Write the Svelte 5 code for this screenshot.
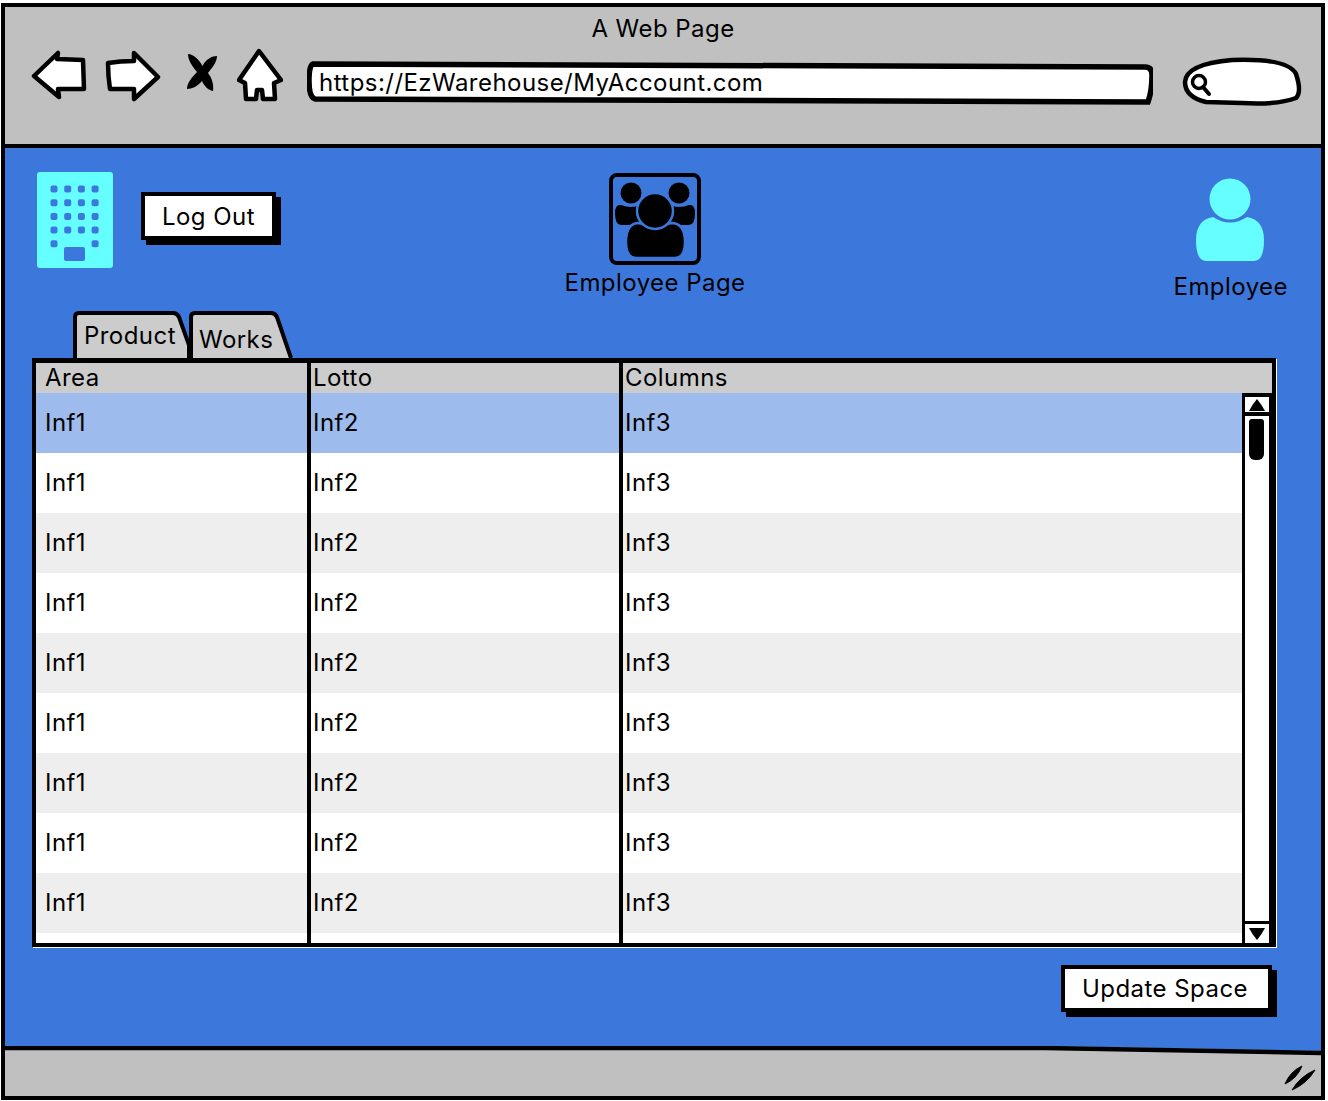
<script>
  const columns = ['Area', 'Lotto', 'Columns'];
  const rows = Array.from({ length: 9 }, () => ['Inf1', 'Inf2', 'Inf3']);
</script>

<div class="window">
  <header class="chrome">
    <div class="title">A Web Page</div>
    <div class="navbar">
      <svg class="nav back" viewBox="0 0 56 50" width="56" height="50">
        <path d="M3 26 L27 3 L26 9 L52 10 L53 39 L27 39 L28 47 Z" fill="#fff" stroke="#000" stroke-width="4.5" stroke-linejoin="round" />
      </svg>
      <svg class="nav forward" viewBox="0 0 56 52" width="56" height="52">
        <path d="M3 13 Q15 11 29 11 L29 3 L53 27 L29 49 L29 39 L5 39 Q3 26 3 13 Z" fill="#fff" stroke="#000" stroke-width="4.5" stroke-linejoin="round" />
      </svg>
      <svg class="nav stop" viewBox="0 0 32 38" width="32" height="38">
        <path d="M2 1 C7 1 13 6 16.5 13 C20 6 26 3 31 3 C31 9 26 15 22 20 C26 25 28 32 27 38 C22 37 18 33 16 28 C12 33 6 36 1 36 C1 30 6 24 11 19 C6 13 2 7 2 1 Z" fill="#000" />
      </svg>
      <svg class="nav home" viewBox="0 0 46 54" width="46" height="54">
        <path d="M22 3 L44 32 L37 35 L38 51 L26 51 L25 42 L20 42 L19 51 L9 51 L8 35 L2 32 Z" fill="#fff" stroke="#000" stroke-width="4.5" stroke-linejoin="round" />
      </svg>
      <div class="url">
        <svg viewBox="0 0 846 46" preserveAspectRatio="none">
          <path d="M6 3 L838 6 Q845 6 845 14 Q845 30 841 41 L8 38 Q2 36 2 20 Q2 4 6 3 Z" fill="#fff" stroke="#000" stroke-width="5.5" />
        </svg>
        <span>https://EzWarehouse/MyAccount.com</span>
      </div>
      <svg class="search" viewBox="0 0 120 50" width="120" height="50">
        <path d="M3 25 Q4 7 50 3 Q106 1 114 17 Q120 35 114 41 Q96 48 60 46 L24 45 Q3 40 3 25 Z" fill="#fff" stroke="#000" stroke-width="4.5" />
        <circle cx="17" cy="25" r="6.5" fill="none" stroke="#000" stroke-width="3.5" />
        <path d="M21 30 L27 37" stroke="#000" stroke-width="4" stroke-linecap="round" />
      </svg>
    </div>
  </header>

  <main class="page">
    <div class="head">
      <div class="head-left">
        <svg class="logo" viewBox="0 0 76 96" width="76" height="96">
          <rect width="76" height="96" rx="3" fill="#66ffff" />
          <g fill="#3c78dc">
            {#each [0, 1, 2, 3] as r}
              {#each [0, 1, 2, 3] as c}
                <rect x={13.5 + c * 13.7} y={13.5 + r * 13.7} width="7" height="7" rx="2" />
              {/each}
            {/each}
            <rect x="13.5" y="68.3" width="7" height="7" rx="2" />
            <rect x="54.6" y="68.3" width="7" height="7" rx="2" />
            <rect x="27" y="75" width="21" height="14" rx="2" />
          </g>
        </svg>
        <button class="btn logout">Log Out</button>
      </div>
      <div class="head-center">
        <svg class="people" viewBox="0 0 92 92" width="92" height="92">
          <rect x="2" y="2" width="88" height="88" rx="6" fill="none" stroke="#000" stroke-width="4" />
          <g fill="#000">
            <circle cx="22" cy="20" r="10.5" />
            <circle cx="70" cy="20" r="10.5" />
            <path d="M6 40 Q6 31 12 32 Q22 36 32 32 L60 32 Q70 36 80 32 Q86 31 86 40 Q86 52 80 52 L12 52 Q6 52 6 40 Z" />
          </g>
          <g fill="#000" stroke="#3c78dc" stroke-width="2.5">
            <path d="M17 69 Q17 50 30 50 Q46 56 62 50 Q76 50 76 69 Q76 85 66 85 L27 85 Q17 85 17 69 Z" />
            <circle cx="46" cy="38" r="18" />
          </g>
        </svg>
        <span class="label">Employee Page</span>
      </div>
      <div class="head-right">
        <svg class="person" viewBox="0 0 68 84" width="68" height="84">
          <circle cx="34" cy="21" r="20.5" fill="#66ffff" />
          <path d="M0 62 Q0 42 17 39 Q34 50 51 39 Q68 42 68 62 Q68 83 58 83 L10 83 Q0 83 0 62 Z" fill="#66ffff" />
        </svg>
        <span class="label right-label">Employee</span>
      </div>
    </div>

    <div class="tabs">
      <div class="tab product">
        <svg viewBox="0 0 118 47" width="118" height="47">
          <path d="M2 47 L2 6 Q2 2 6 2 L100 2 Q104 2 106 6 L116 34 L116 47" fill="#ccc" stroke="#000" stroke-width="4" />
        </svg>
        <span>Product</span>
      </div>
      <div class="tab works">
        <svg viewBox="0 0 104 47" width="104" height="47">
          <path d="M2 47 L2 6 Q2 2 6 2 L82 2 Q86 2 88 6 L102 47" fill="#ccc" stroke="#000" stroke-width="4" />
        </svg>
        <span>Works</span>
      </div>
    </div>

    <div class="grid">
      <div class="row thead">
        {#each columns as name}
          <div class="cell">{name}</div>
        {/each}
      </div>
      <div class="tbody">
        <div class="rows">
          {#each rows as row, i}
            <div class="row item" class:selected={i === 0} class:alt={i > 0 && i % 2 === 0}>
              {#each row as value}
                <div class="cell">{value}</div>
              {/each}
            </div>
          {/each}
          <div class="row filler">
            <div class="cell"></div>
            <div class="cell"></div>
            <div class="cell"></div>
          </div>
        </div>
        <div class="scrollbar">
          <div class="arrow up">
            <svg viewBox="0 0 16 12" width="16" height="12"><path d="M8 0 Q13 6 16 12 L0 12 Q3 6 8 0 Z" fill="#000" /></svg>
          </div>
          <div class="track"><div class="thumb"></div></div>
          <div class="arrow down">
            <svg viewBox="0 0 16 12" width="16" height="12"><path d="M0 0 L16 0 Q13 6 8 12 Q3 6 0 0 Z" fill="#000" /></svg>
          </div>
        </div>
      </div>
    </div>

    <div class="actions">
      <button class="btn update">Update Space</button>
    </div>
  </main>

  <footer class="status">
    <svg class="edge" viewBox="0 0 1316 10" preserveAspectRatio="none">
      <path d="M1040 0 L1316 0 L1316 5 Z" fill="#3c78dc" />
      <path d="M0 2 L1040 2 L1316 7" fill="none" stroke="#000" stroke-width="4.5" />
    </svg>
    <svg class="grip" viewBox="0 0 36 30" width="36" height="30">
      <path d="M4 23 Q9 10.5 21 5 Q16 17.5 4 23 Z M11 29 Q19 15.5 34 9 Q26 22.5 11 29 Z" fill="#000" stroke="#000" stroke-width="1" />
    </svg>
  </footer>
</div>

<style>
  :global(body) {
    background: #fff;
  }

  .window {
    box-sizing: border-box;
    width: 1324px;
    height: 1097px;
    margin: 3px 0 0 1px;
    border: 4px solid #000;
    display: flex;
    flex-direction: column;
    font-family: "Inter", "Noto Sans", sans-serif;
    font-size: 24px;
    letter-spacing: 0.45px;
    color: #000;
  }

  .chrome {
    box-sizing: border-box;
    height: 141px;
    background: #c0c0c0;
    border-bottom: 4px solid #000;
    flex: none;
  }
  .title {
    text-align: center;
    padding-top: 7px;
    line-height: 30px;
  }
  .navbar {
    display: flex;
    align-items: flex-start;
    padding: 0 0 0 26px;
    margin-top: -2px;
  }
  .nav {
    flex: none;
  }
  .back { margin-top: 8px; }
  .forward { margin: 8px 0 0 18px; }
  .stop { margin: 11px 0 0 25px; }
  .home { margin: 6px 0 0 19px; }

  .url {
    position: relative;
    width: 846px;
    height: 46px;
    margin: 19px 0 0 24px;
    flex: none;
  }
  .url svg {
    position: absolute;
    inset: 0;
    width: 100%;
    height: 100%;
  }
  .url span {
    position: relative;
    display: block;
    padding: 5px 0 0 12px;
    line-height: 34px;
  }
  .search {
    flex: none;
    margin: 15px 0 0 29px;
  }

  .page {
    flex: 1;
    background: #3c78dc;
    padding: 24px 45px 0 27px;
    min-height: 0;
  }
  .head {
    display: grid;
    grid-template-columns: 473px 300px 1fr;
    height: 139px;
    margin-right: -12px;
  }
  .head-left {
    display: flex;
    align-items: flex-start;
    gap: 28px;
    padding-left: 5px;
  }
  .head-center {
    display: flex;
    flex-direction: column;
    align-items: center;
    padding-top: 1px;
  }
  .head-right {
    display: flex;
    flex-direction: column;
    align-items: flex-end;
    padding-top: 6px;
  }
  .head-right svg {
    margin-right: 24px;
  }
  .label {
    line-height: 30px;
    margin-top: 3px;
  }
  .right-label {
    margin-top: 10px;
  }

  .btn {
    box-sizing: border-box;
    display: block;
    border: 4px solid #000;
    border-radius: 0;
    background: #fff;
    box-shadow: 5px 5px 0 #000;
    font: inherit;
    letter-spacing: inherit;
    color: #000;
    padding: 0;
    cursor: pointer;
  }
  .logout {
    width: 135px;
    height: 48px;
    margin-top: 20px;
  }
  .update {
    width: 211px;
    height: 47px;
    padding-right: 3px;
  }

  .tabs {
    display: flex;
    height: 47px;
    padding-left: 41px;
  }
  .tab {
    position: relative;
  }
  .tab svg {
    display: block;
  }
  .tab span {
    position: absolute;
    top: 10px;
    left: 11px;
    line-height: 30px;
  }
  .works {
    margin-left: -2px;
  }
  .works span {
    top: 14px;
    left: 10px;
  }

  .grid {
    box-sizing: border-box;
    width: 1244px;
    height: 589px;
    border: 4px solid #000;
    border-top-width: 5px;
    background: #fff;
    box-shadow: 1px 1px 0 #fff;
  }
  .row {
    display: grid;
    grid-template-columns: 275px 312px 1fr;
  }
  .cell {
    box-sizing: border-box;
    display: flex;
    align-items: center;
    padding-left: 2px;
    border-right: 4px solid #000;
  }
  .cell:first-child {
    padding-left: 9px;
  }
  .cell:last-child {
    border-right: 0;
  }
  .thead {
    height: 30px;
    background: #ccc;
  }
  .thead .cell {
    padding-bottom: 7px;
  }
  .tbody {
    display: flex;
    height: 550px;
  }
  .rows {
    flex: 1;
  }
  .item {
    height: 60px;
  }
  .item .cell {
    padding-bottom: 2px;
  }
  .selected {
    background: #9dbbed;
  }
  .alt {
    background: #eee;
  }
  .filler {
    height: 10px;
  }

  .scrollbar {
    box-sizing: border-box;
    width: 30px;
    flex: none;
    display: flex;
    flex-direction: column;
    background: #fff;
    border: solid #000;
    border-width: 4px 3px 0 3px;
  }
  .arrow {
    display: flex;
    justify-content: center;
    background: #fff;
    flex: none;
  }
  .up {
    height: 15px;
    padding-top: 2px;
    box-sizing: border-box;
  }
  .down {
    height: 22px;
    padding-top: 4px;
    box-sizing: border-box;
    border-top: 3px solid #000;
  }
  .track {
    flex: 1;
    border-top: 4px solid #000;
    padding: 3px 0 0 4px;
  }
  .thumb {
    width: 15px;
    height: 41px;
    background: #000;
    border-radius: 3px 3px 6px 6px;
  }

  .actions {
    display: flex;
    justify-content: flex-end;
    padding: 18px 4px 0 0;
  }

  .status {
    position: relative;
    height: 50px;
    flex: none;
    background: #c0c0c0;
  }
  .edge {
    position: absolute;
    left: 0;
    top: 0;
    width: 100%;
    height: 10px;
  }
  .grip {
    position: absolute;
    right: 4px;
    top: 15px;
  }
</style>
